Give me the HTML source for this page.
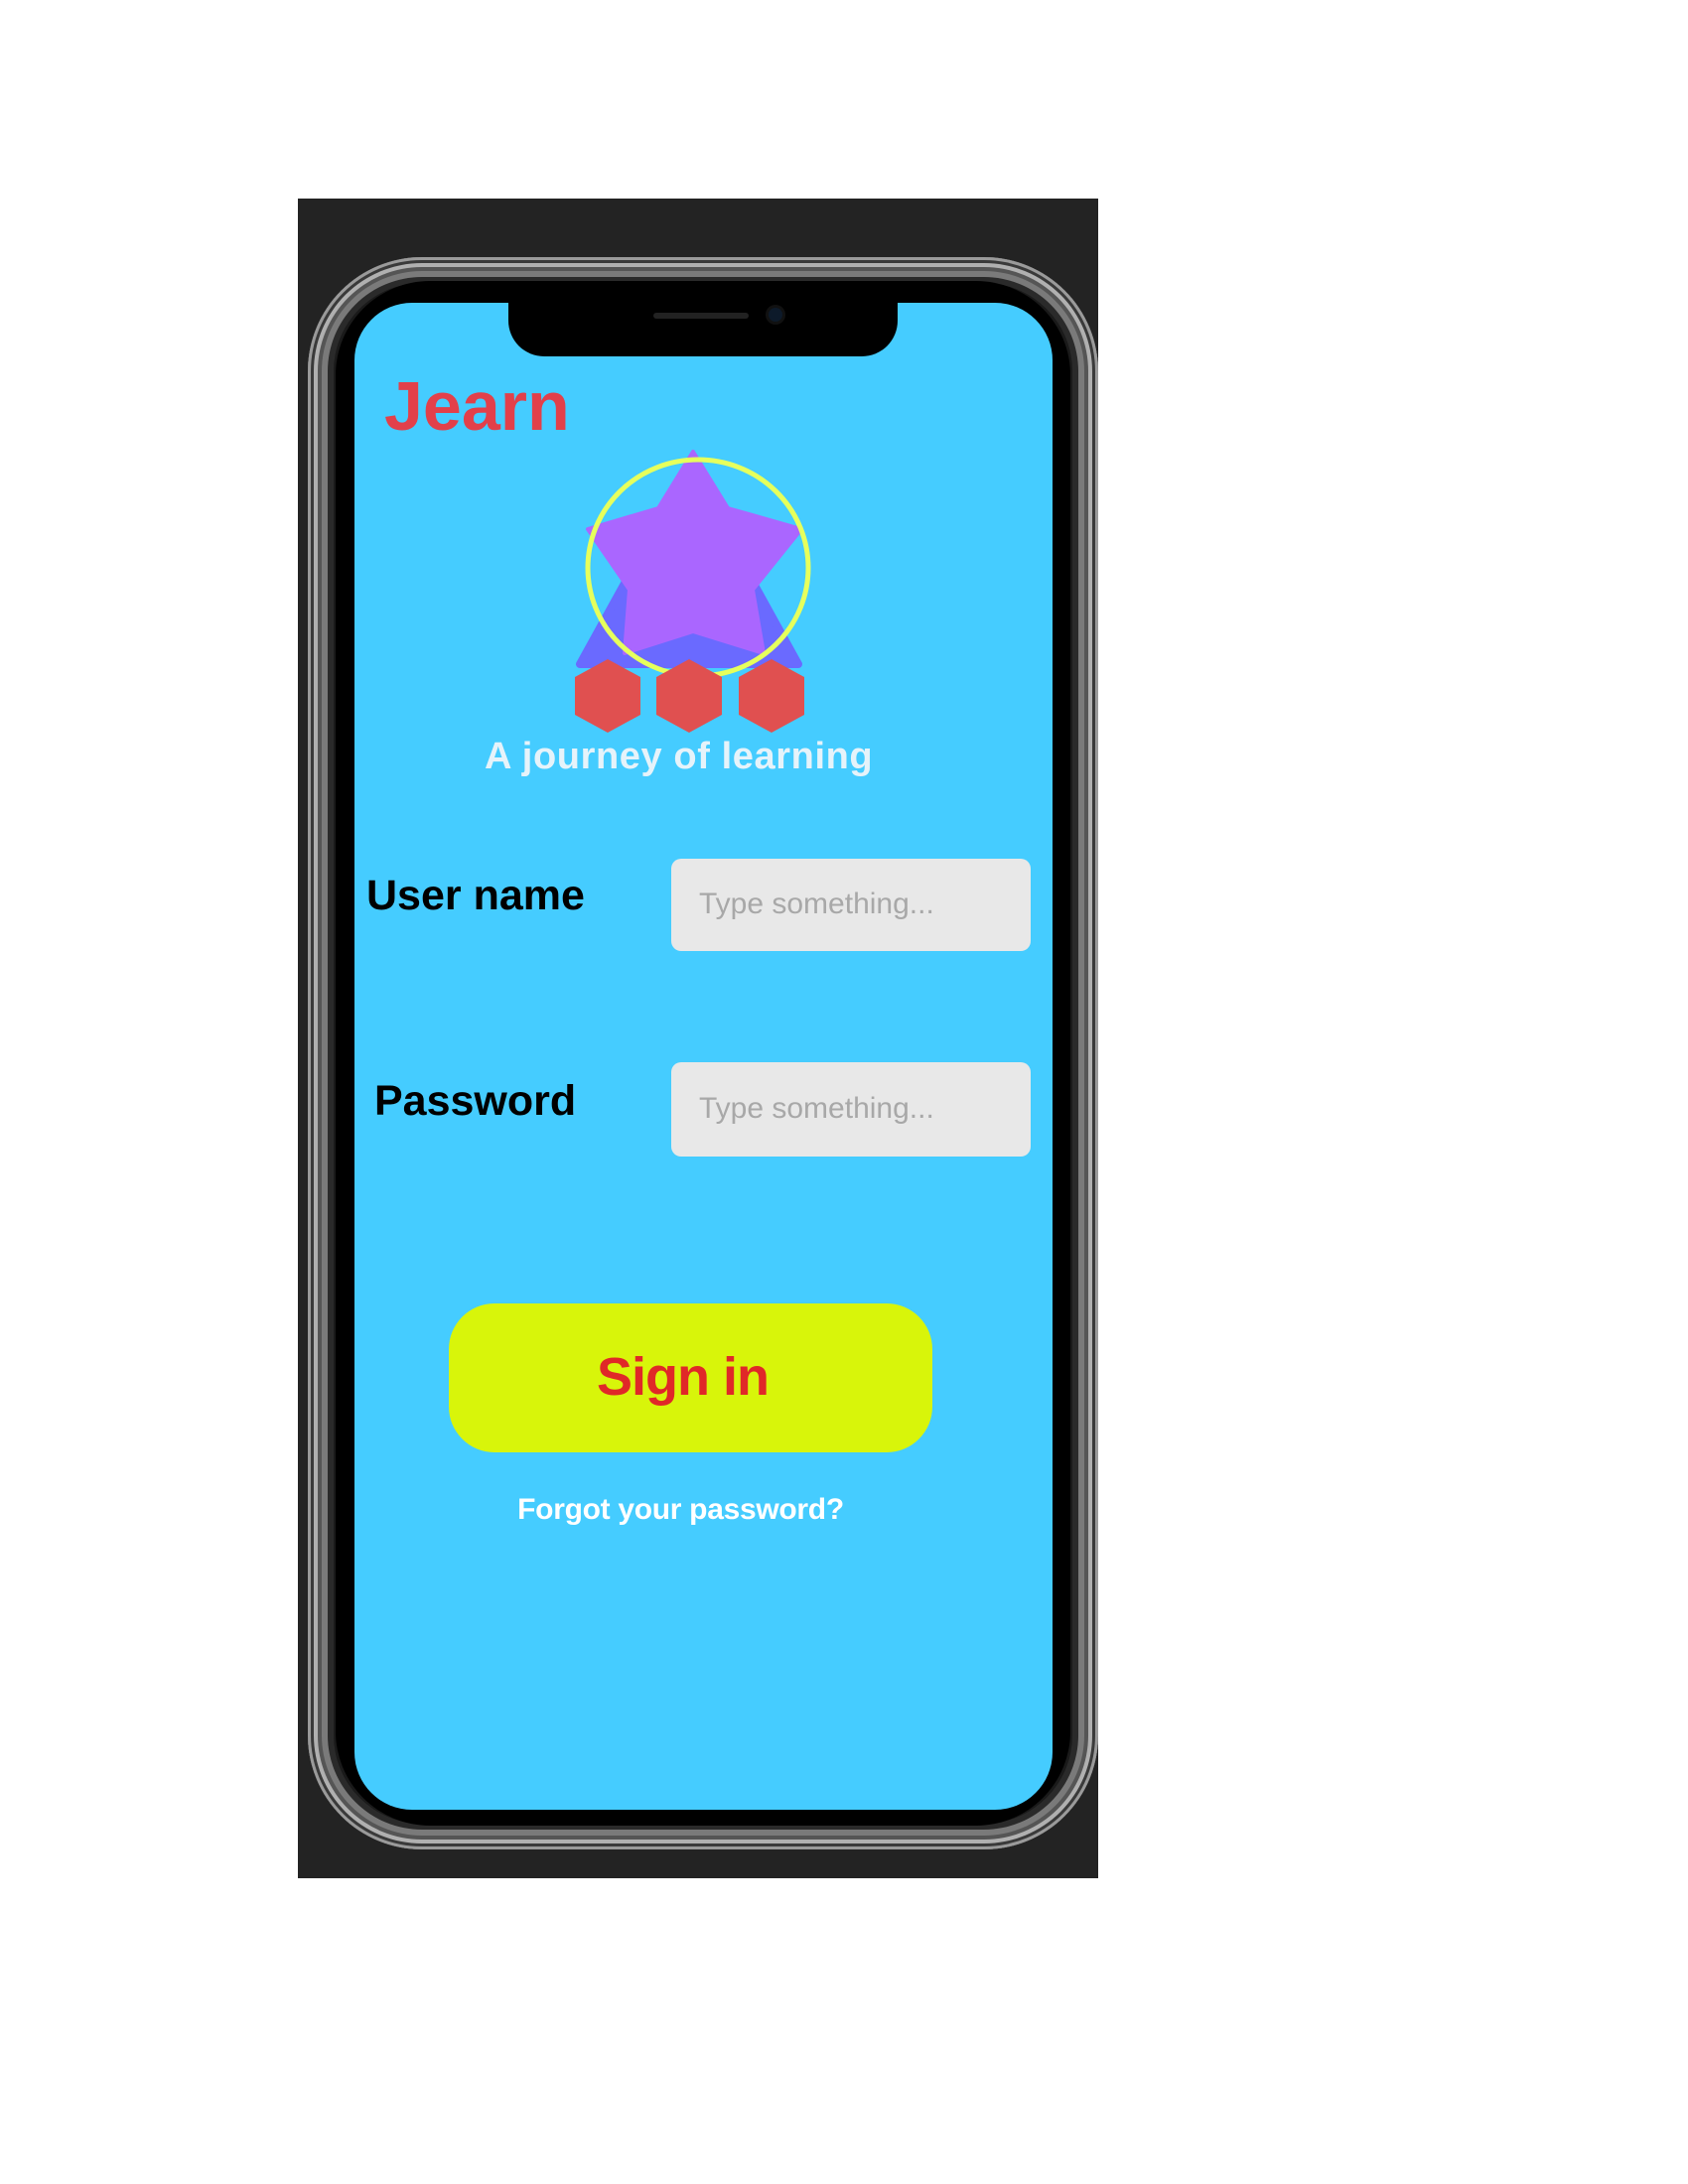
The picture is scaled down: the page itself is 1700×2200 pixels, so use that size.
<!DOCTYPE html>
<html><head><meta charset="utf-8"><style>
html,body{margin:0;padding:0;background:#fff;width:1700px;height:2200px;position:relative;overflow:hidden;font-family:"Liberation Sans",Arial,sans-serif}
.a{position:absolute}
</style></head><body>
<div class="a" style="left:300px;top:200px;width:806px;height:1692px;background:#232323"></div>
<!-- frame -->
<div class="a" style="left:310px;top:259px;width:796px;height:1604px;border-radius:115px;background:#1a1a1a;box-shadow:inset 0 0 0 3px #9a9a9a,inset 0 0 0 6px #3a3a3a,inset 0 0 0 10px #b0b0b0,inset 0 0 0 14px #555,inset 0 0 0 20px #7a7a7a,inset 0 0 0 26px #2a2a2a"></div>
<div class="a" style="left:338px;top:283px;width:740px;height:1556px;border-radius:95px;background:#000"></div>
<!-- screen -->
<div class="a" style="left:357px;top:305px;width:703px;height:1518px;border-radius:58px;background:#45ccff;overflow:hidden">
  <div class="a" style="left:155px;top:-10px;width:392px;height:64px;background:#000;border-radius:0 0 36px 36px"></div>
</div>
<div class="a" style="left:658px;top:315px;width:96px;height:6px;background:#222;border-radius:3px"></div>
<div class="a" style="left:774px;top:310px;width:14px;height:14px;background:#0d1a2a;border-radius:50%;box-shadow:0 0 0 3px #111"></div>
<!-- Jearn -->
<div class="a" style="left:387px;top:369px;font-size:70px;font-weight:bold;color:#e2404a;line-height:80px">Jearn</div>
<!-- logo -->
<svg class="a" style="left:0;top:0" width="1700" height="900">
  <polygon points="584,669 804,669 694,470" fill="#6a6aff" stroke="#6a6aff" stroke-width="8" stroke-linejoin="round"/>
  <polygon points="698,455 733,512 807,533 758,594 769,658 698,636 629,658 634,594 592,533 663,512" fill="#aa66ff" stroke="#aa66ff" stroke-width="4" stroke-linejoin="round"/>
  <ellipse cx="703" cy="572" rx="111" ry="109" fill="none" stroke="#e6ff5c" stroke-width="5"/>
  <g fill="#e05050">
    <polygon points="612,664 645,682 645,720 612,738 579,720 579,682"/>
    <polygon points="694,664 727,682 727,720 694,738 661,720 661,682"/>
    <polygon points="777,664 810,682 810,720 777,738 744,720 744,682"/>
  </g>
</svg>
<div class="a" style="left:488px;top:740px;font-size:38px;font-weight:bold;color:#e6f3fa;line-height:44px;white-space:nowrap;letter-spacing:0.6px">A journey of learning</div>
<!-- form -->
<div class="a" style="left:369px;top:876px;font-size:43px;font-weight:bold;color:#000;line-height:52px;white-space:nowrap">User name</div>
<div class="a" style="left:676px;top:865px;width:362px;height:93px;background:#e8e8e8;border-radius:10px"></div>
<div class="a" style="left:704px;top:893px;font-size:30px;color:#a8a8a8;line-height:36px">Type something...</div>
<div class="a" style="left:377px;top:1083px;font-size:43px;font-weight:bold;color:#000;line-height:52px;white-space:nowrap">Password</div>
<div class="a" style="left:676px;top:1070px;width:362px;height:95px;background:#e8e8e8;border-radius:10px"></div>
<div class="a" style="left:704px;top:1099px;font-size:30px;color:#a8a8a8;line-height:36px">Type something...</div>
<div class="a" style="left:452px;top:1313px;width:487px;height:150px;background:#d8f50a;border-radius:46px"></div>
<div class="a" style="left:444px;top:1354px;width:487px;text-align:center;font-size:54px;font-weight:bold;color:#e02828;line-height:66px;letter-spacing:-1px">Sign in</div>
<div class="a" style="left:442px;top:1503px;width:487px;text-align:center;font-size:30px;font-weight:bold;color:#fff;line-height:36px;letter-spacing:-0.3px;white-space:nowrap">Forgot your password?</div>
</body></html>
